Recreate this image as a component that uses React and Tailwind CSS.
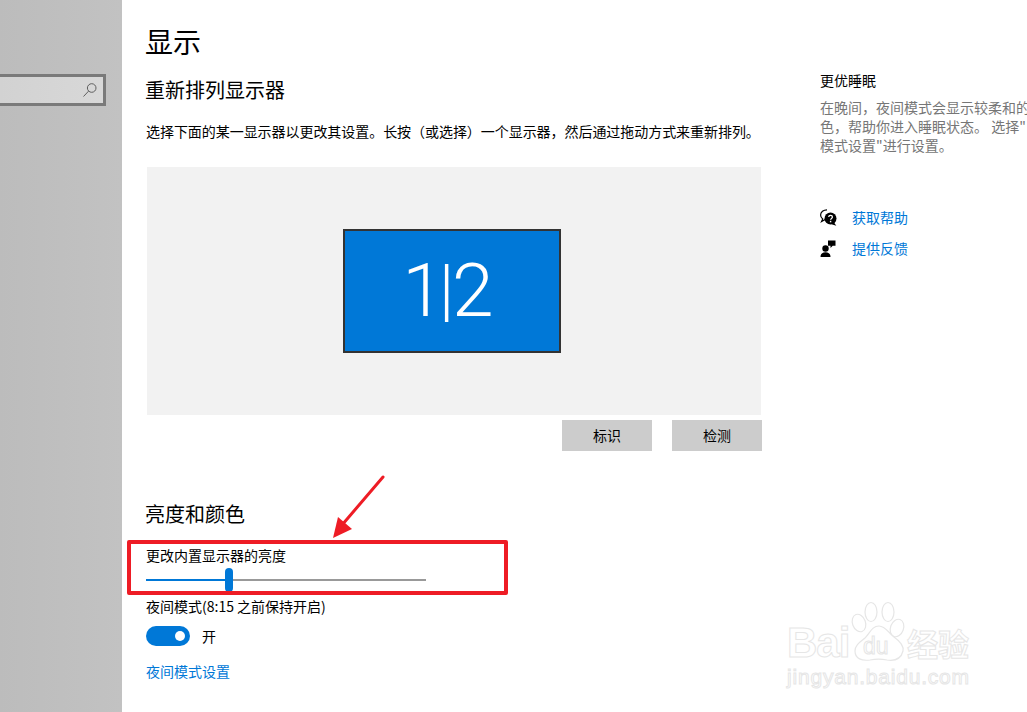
import React from 'react';

const cjk = "font-['Microsoft_YaHei','Noto_Sans_CJK_SC','Noto_Sans',sans-serif]";

function SearchIcon() {
  return (
    <svg width="16" height="16" viewBox="0 0 16 16" fill="none" stroke="#5f5f5f" strokeWidth="1">
      <circle cx="9.7" cy="6" r="4.3" />
      <path d="M6.6 9.1 1.5 14.5" />
    </svg>
  );
}

function HelpIcon() {
  return (
    <svg width="17" height="17" viewBox="0 0 17 17">
      <path d="M7 .8C3.4.8.6 3 .6 6c0 1.6.8 3 2.1 3.9L1.5 12.600l3.700-2.100" fill="#fff" stroke="#000" strokeWidth="1.200" />
      <circle cx="10.500" cy="9.500" r="6" fill="#000" />
      <path d="M14 13.500 16.300 16.800 11.500 15.300Z" fill="#000" />
      <path d="M8.700 8c.1-2.200 3.700-2.200 3.700 0 0 1.400-1.800 1.400-1.800 2.800" fill="none" stroke="#fff" strokeWidth="1.300" />
      <rect x="9.900" y="11.800" width="1.400" height="1.500" fill="#fff" />
    </svg>
  );
}

function FeedbackIcon() {
  return (
    <svg width="16" height="17" viewBox="0 0 16 17" fill="#000">
      <circle cx="5.500" cy="8.500" r="3.200" />
      <path d="M.5 17c0-3.300 2-4.800 5-4.800s5 1.500 5 4.800Z" />
      <path d="M8 .5h7.500v5.300h-2.800L10.500 8V5.800H8Z" />
    </svg>
  );
}

function Watermark() {
  const outline = "text-white [-webkit-text-stroke:1px_#e6e6e6]";
  return (
    <div className={`absolute left-[787px] top-[600px] w-[200px] h-[100px] ${outline}`}>
      <svg className="absolute left-[0px] top-[0px]" width="125" height="72" viewBox="0 0 125 72" fill="#fff" stroke="#e6e6e6" strokeWidth="1.200">
        <ellipse cx="72" cy="23" rx="6.500" ry="9" transform="rotate(-20 72 23)" />
        <ellipse cx="84" cy="12" rx="6" ry="9.500" />
        <ellipse cx="101" cy="12" rx="6" ry="9.500" />
        <ellipse cx="110" cy="28" rx="6.500" ry="9" transform="rotate(20 110 28)" />
        <path d="M92 26c6 0 9 6 15 11 7 5 10 9 9 14-2 8-9 10-16 9-5-1-12-1-17 0-8 1-15-1-15-9 0-6 5-9 10-13 5-5 7-12 14-12Z" />
      </svg>
      <span className="absolute left-[0px] top-[18px] text-[42px] leading-[50px] font-bold font-['Liberation_Sans',sans-serif] tracking-[-1px]">Bai</span>
      <span className="absolute left-[76px] top-[32px] text-[23px] leading-[28px] font-['Liberation_Sans',sans-serif]">du</span>
      <span className={`absolute left-[120px] top-[21px] text-[31px] leading-[44px] font-bold ${cjk}`}>经验</span>
      <span className="absolute left-[0px] top-[63px] text-[21px] leading-[28px] font-['Liberation_Sans',sans-serif] tracking-[0.800px]">jingyan.baidu.com</span>
    </div>
  );
}

export default function App() {
  return (
    <div className={`relative flex w-[1027px] h-[712px] overflow-hidden bg-white text-black ${cjk}`}>
      <aside className="w-[122px] shrink-0 pt-[74px] bg-gradient-to-r from-[#bcbcbc] to-[#c2c2c2]">
        <div className="flex items-center justify-end w-[106px] h-[32px] pr-[5px] bg-gradient-to-r from-[#d2d2d2] to-[#d8d8d8] border-[3px] border-l-0 border-[#7a7a7a]">
          <SearchIcon />
        </div>
      </aside>

      <main className="w-[698px] shrink-0 pl-[24px]">
        <h1 className="-ml-[1px] mt-[21px] text-[28px] leading-[40px]">显示</h1>
        <h2 className="-ml-[1px] mt-[15px] text-[20px] leading-[28px]">重新排列显示器</h2>
        <p className="mt-[17px] text-[14px] leading-[20px] whitespace-nowrap tracking-[-0.050px]">选择下面的某一显示器以更改其设置。长按（或选择）一个显示器，然后通过拖动方式来重新排列。</p>

        <div className="flex items-center justify-center w-[614px] h-[248px] mt-[26px] ml-[1px] pr-[4px] bg-[#f2f2f2]">
          <div className="flex items-center justify-center w-[218px] h-[124px] pb-[2px] pr-[8px] bg-[#0078d7] border-2 border-[#333333] text-white leading-none font-['Roboto',sans-serif]">
            <span className="text-[75px] font-light">1</span>
            <span className="text-[68px] font-light ml-[-5px] mr-[-2px]">|</span>
            <span className="text-[75px] font-light">2</span>
          </div>
        </div>

        <div className="flex justify-end gap-[20px] w-[616px] mt-[5px]">
          <button className="w-[90px] h-[31px] bg-[#cccccc] text-[14px]">标识</button>
          <button className="w-[90px] h-[31px] bg-[#cccccc] text-[14px]">检测</button>
        </div>

        <h2 className="-ml-[1px] mt-[49px] text-[20px] leading-[28px]">亮度和颜色</h2>
        <div className="mt-[17px] text-[14px] leading-[20px]">更改内置显示器的亮度</div>
        <div className="relative flex items-center w-[280px] h-[24px] mt-[3px]">
          <div className="w-[80px] h-[2px] bg-[#0078d7]" />
          <div className="w-[200px] h-[2px] bg-[#999999]" />
          <div className="absolute left-[79px] top-[0px] w-[8px] h-[24px] rounded-full bg-[#0078d7]" />
        </div>
        <div className="mt-[4px] text-[14px] leading-[20px]">夜间模式(8:15 之前保持开启)</div>
        <div className="flex items-center gap-[12px] mt-[10px]">
          <div className="flex items-center justify-end w-[44px] h-[20px] pr-[5px] rounded-full bg-[#0078d7]">
            <div className="w-[10px] h-[10px] rounded-full bg-white" />
          </div>
          <span className="text-[14px] leading-[20px]">开</span>
        </div>
        <a className="block mt-[15px] text-[14px] leading-[20px] text-[#0078d7]">夜间模式设置</a>
      </main>

      <section className="flex-1 min-w-0 pt-[70px] text-[14px] leading-[19px]">
        <h3 className="leading-[20px]">更优睡眠</h3>
        <div className="mt-[8px] text-[#767676] whitespace-nowrap">
          <p>在晚间，夜间模式会显示较柔和的</p>
          <p>色，帮助你进入睡眠状态。 选择"</p>
          <p>模式设置"进行设置。</p>
        </div>
        <div className="flex items-center gap-[15px] mt-[52px] h-[20px] text-[#0078d7]">
          <HelpIcon />
          <a>获取帮助</a>
        </div>
        <div className="flex items-center gap-[16px] mt-[11px] h-[20px] text-[#0078d7]">
          <FeedbackIcon />
          <a>提供反馈</a>
        </div>
      </section>

      {/* annotation on top of the screenshot */}
      <div className="absolute left-[127px] top-[540px] w-[381px] h-[55px] rounded-[2px] border-[4px] border-[#ee1c25]" />
      <svg className="absolute left-[325px] top-[470px]" width="65" height="72" viewBox="0 0 65 72" fill="#ee1c25">
        <path d="M58 7 17 55" stroke="#ee1c25" strokeWidth="3" strokeLinecap="round" />
        <path d="M8 68 13 47 27 59Z" />
      </svg>
      <Watermark />
    </div>
  );
}
